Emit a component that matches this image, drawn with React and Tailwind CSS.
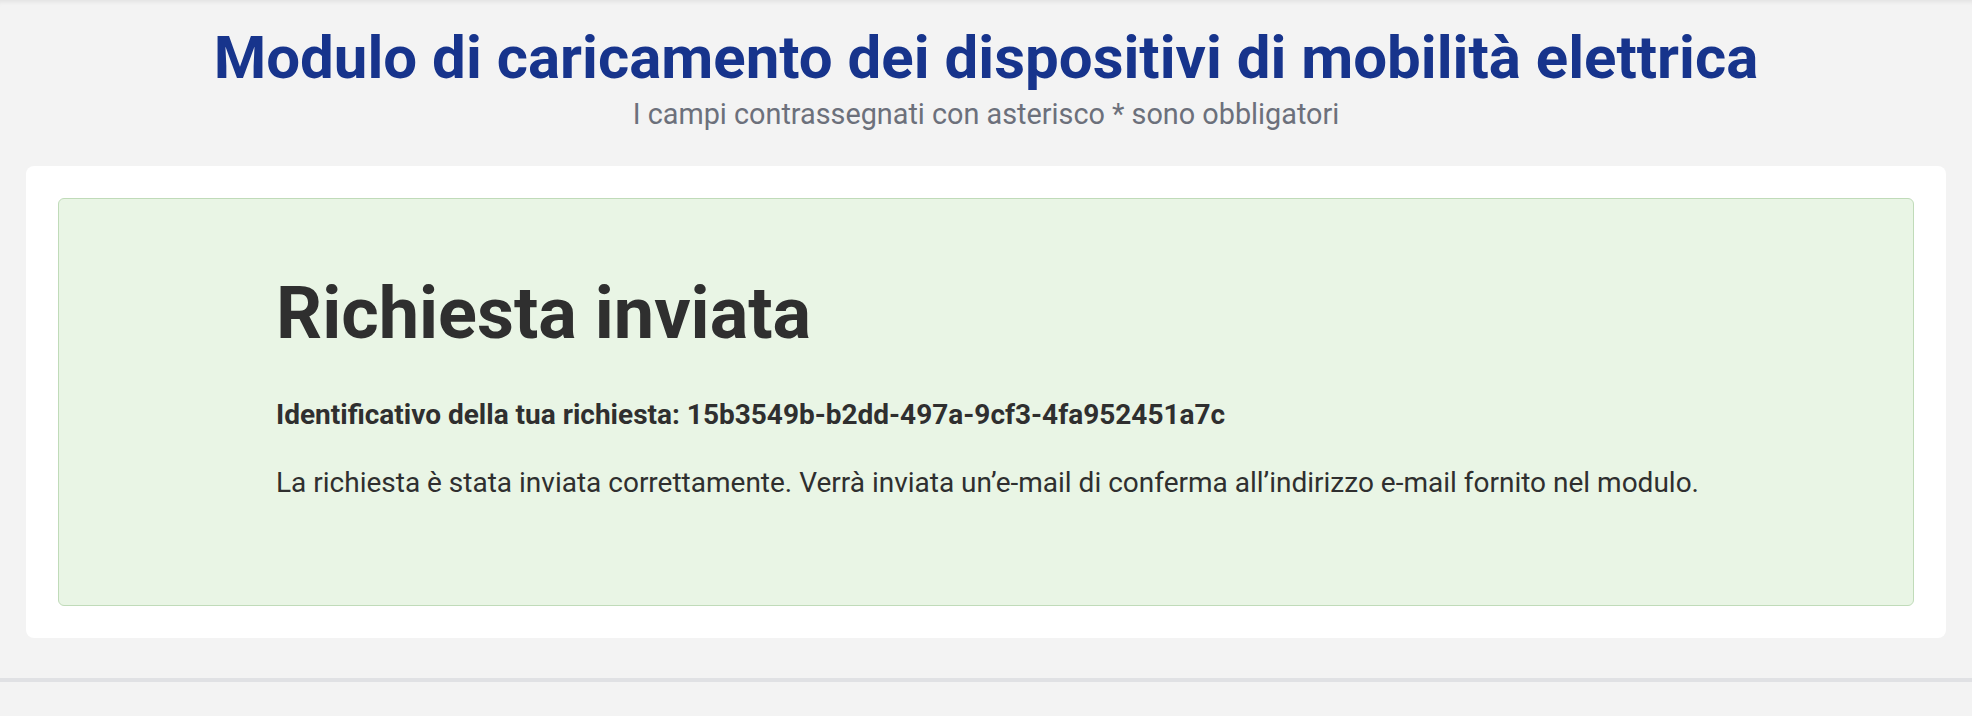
export default function App() {
  const requestId = '15b3549b-b2dd-497a-9cf3-4fa952451a7c'

  return (
    <div className="min-h-screen bg-[#f3f3f3] font-['Roboto',sans-serif] text-[#2f2f2f]">
      {/* Header */}
      <header className="pt-[22px] pb-[34px] text-center shadow-[inset_0_5px_4px_-3px_rgba(0,0,0,0.07)]">
        <h1 className="text-[60px] leading-[72px] font-bold text-[#17348c]">
          Modulo di caricamento dei dispositivi di mobilità elettrica
        </h1>
        <p className="mt-[2px] text-[28.8px] leading-[36px] text-[#6c707b]">
          I campi contrassegnati con asterisco * sono obbligatori
        </p>
      </header>

      {/* Card */}
      <main className="max-w-[1920px] mx-auto bg-white rounded-lg p-8">
        <div className="border-[1.5px] border-[#c0dbb9] rounded-md bg-[#e9f5e5] pt-[72px] pb-[104px] pl-[217px] pr-[150px]">
          <h2 className="text-[72px] leading-[86px] font-bold">Richiesta inviata</h2>
          <p className="mt-[40px] text-[28px] leading-[36px] font-bold">
            Identificativo della tua richiesta: {requestId}
          </p>
          <p className="mt-[32px] text-[28px] leading-[36px]">
            La richiesta è stata inviata correttamente. Verrà inviata un’e-mail di conferma all’indirizzo e-mail fornito nel modulo.
          </p>
        </div>
      </main>

      {/* Footer */}
      <footer className="mt-[40px] border-t-4 border-[#e0e1e4] h-[34px]" />
    </div>
  )
}
